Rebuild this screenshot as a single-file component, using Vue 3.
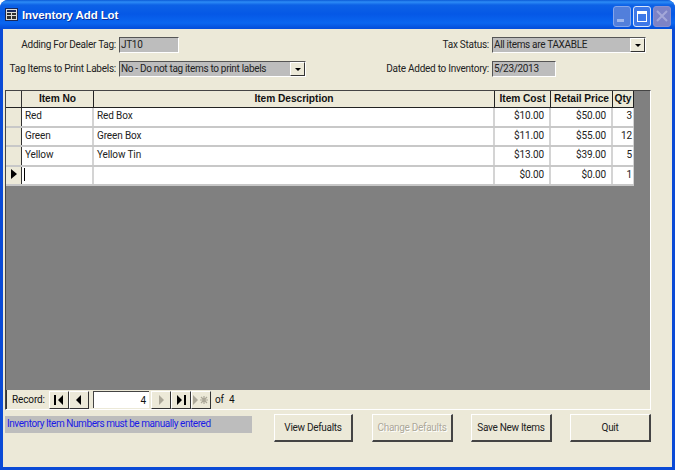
<script setup>
const rows = [
  { no: 'Red', desc: 'Red Box', cost: '$10.00', price: '$50.00', qty: '3' },
  { no: 'Green', desc: 'Green Box', cost: '$11.00', price: '$55.00', qty: '12' },
  { no: 'Yellow', desc: 'Yellow Tin', cost: '$13.00', price: '$39.00', qty: '5' },
  { no: '', desc: '', cost: '$0.00', price: '$0.00', qty: '1', current: true }
]
const buttons = [
  { label: 'View Defualts', cls: 'b1' },
  { label: 'Change Defaults', cls: 'b2', disabled: true },
  { label: 'Save New Items', cls: 'b3' },
  { label: 'Quit', cls: 'b4' }
]
</script>

<template>
  <div class="window">
    <header class="titlebar">
      <svg class="appicon" width="13" height="13" viewBox="0 0 13 13">
        <rect x="0.5" y="0.5" width="12" height="12" fill="#dcdcd8" stroke="#1a2a5a" />
        <rect x="2" y="2" width="9" height="2" fill="#1a2a5a" />
        <rect x="2" y="5" width="4" height="2" fill="#303030" />
        <rect x="7" y="5" width="4" height="2" fill="#303030" />
        <rect x="2" y="8" width="4" height="3" fill="#303030" />
        <rect x="7" y="8" width="4" height="3" fill="#303030" />
      </svg>
      <span class="title">Inventory Add Lot</span>
      <div class="winbtns">
        <span class="wb wmin"><i class="glyph-min"></i></span>
        <span class="wb wmax"><i class="glyph-max"></i></span>
        <span class="wb wclose">
          <svg width="14" height="14" viewBox="0 0 14 14"><path d="M2 2 12 12M12 2 2 12" stroke="#a4a8d8" stroke-width="2" /></svg>
        </span>
      </div>
    </header>

    <main class="client">
      <section class="fields">
        <label class="lbl">Adding For Dealer Tag:</label>
        <div class="box short1">JT10</div>
        <label class="lbl">Tax Status:</label>
        <div class="box combo">All items are TAXABLE<span class="drop"><i></i></span></div>
        <label class="lbl">Tag Items to Print Labels:</label>
        <div class="box combo">No - Do not tag items to print labels<span class="drop"><i></i></span></div>
        <label class="lbl">Date Added to Inventory:</label>
        <div class="box short2">5/23/2013</div>
      </section>

      <section class="frame">
        <div class="sheet">
          <div class="row head">
            <div class="sel"></div>
            <div class="c no">Item No</div>
            <div class="c desc">Item Description</div>
            <div class="c cost">Item Cost</div>
            <div class="c price">Retail Price</div>
            <div class="c qty">Qty</div>
          </div>
          <div v-for="r in rows" :key="r.no + r.qty" class="row data">
            <div class="sel"><i v-if="r.current" class="arrow"></i></div>
            <div class="c no"><i v-if="r.current" class="caret"></i>{{ r.no }}</div>
            <div class="c desc">{{ r.desc }}</div>
            <div class="c cost">{{ r.cost }}</div>
            <div class="c price">{{ r.price }}</div>
            <div class="c qty">{{ r.qty }}</div>
          </div>
        </div>
        <div class="nav">
          <span class="navlabel">Record:</span>
          <div class="navgroup">
            <span class="nb">
              <svg width="12" height="10" viewBox="0 0 12 10"><path d="M1 0h2v10H1zM10 0v10L5 5z" fill="#000" /></svg>
            </span>
            <span class="nb">
              <svg width="12" height="10" viewBox="0 0 12 10"><path d="M8 0v10L3 5z" fill="#000" /></svg>
            </span>
          </div>
          <div class="navinput">4</div>
          <div class="navgroup">
            <span class="nb">
              <svg width="12" height="10" viewBox="0 0 12 10"><path d="M4 0v10l5-5z" fill="#aca899" /></svg>
            </span>
            <span class="nb">
              <svg width="12" height="10" viewBox="0 0 12 10"><path d="M2 0v10l5-5zM9 0h2v10H9z" fill="#000" /></svg>
            </span>
            <span class="nb">
              <svg width="16" height="10" viewBox="0 0 16 10"><path d="M0 0v10l5-5z" fill="#aca899" /><path d="M7 5h8M11 1v8M8 2l6 6M14 2 8 8" stroke="#aca899" stroke-width="1.2" /></svg>
            </span>
          </div>
          <span class="navof">of</span>
          <span class="navtotal">4</span>
        </div>
      </section>

      <footer class="bottom">
        <div class="msg">Inventory Item Numbers must be manually entered</div>
        <div class="actions">
          <button v-for="b in buttons" :key="b.label" class="btn" :class="[b.cls, { off: b.disabled }]">{{ b.label }}</button>
        </div>
      </footer>
    </main>
  </div>
</template>

<style>
html, body { margin: 0; background: #fff; }
</style>

<style scoped>
.window {
  width: 675px;
  height: 470px;
  box-sizing: border-box;
  display: flex;
  flex-direction: column;
  background: #0a4ad6;
  border-radius: 8px 8px 0 0;
  overflow: hidden;
  font-family: Roboto, "Liberation Sans", Arial, sans-serif;
  font-size: 10px;
  letter-spacing: -0.12px;
  color: #111;
}
.titlebar {
  height: 29px;
  flex: none;
  display: flex;
  align-items: center;
  padding: 0 4px 0 5px;
  background: linear-gradient(#0b5ad6 0, #2d8cf6 2px, #0d62e6 5px, #0558e6 14px, #0a66f0 23px, #0450dc 28px);
}
.appicon { margin-right: 4px; margin-top: -1px; }
.title {
  color: #fff;
  font-family: "Liberation Sans", Arial, sans-serif;
  font-weight: bold;
  font-size: 11.5px;
  letter-spacing: -0.1px;
  text-shadow: 1px 1px 0 #0a2f9a;
}
.winbtns { margin-left: auto; display: flex; gap: 2px; margin-top: 3px; }
.wb {
  width: 18px;
  height: 21px;
  box-sizing: border-box;
  border-radius: 3px;
  display: flex;
  align-items: center;
  justify-content: center;
  position: relative;
}
.wmin { background: #527fdb; border: 1px solid #86a6ea; }
.wmax { background: #3e78e8; border: 1px solid #dbe6fb; }
.wclose { background: #7d83c6; border: 1px solid #8a90cf; }
.glyph-min { width: 7px; height: 3px; background: #9db6ec; margin-top: 9px; margin-right: 3px; }
.glyph-max { width: 10px; height: 11px; box-sizing: border-box; border: 1px solid #fff; border-top-width: 3px; }

.client {
  flex: 1;
  margin: 0 3px 3px;
  background: #ece9d8;
  padding-top: 8px;
  display: flex;
  flex-direction: column;
  min-height: 0;
}
.fields {
  display: grid;
  grid-template-columns: 113px 187px 180px 154px;
  grid-auto-rows: 16px;
  column-gap: 3px;
  row-gap: 8px;
}
.lbl { text-align: right; line-height: 16px; color: #222; white-space: nowrap; letter-spacing: -0.26px; }
.box {
  box-sizing: border-box;
  height: 16px;
  line-height: 14px;
  background: #bdbdbd;
  border-top: 1px solid #555;
  border-left: 1px solid #555;
  border-right: 1px solid #fff;
  border-bottom: 1px solid #fff;
  padding-left: 1px;
  position: relative;
  color: #222;
  white-space: nowrap;
  letter-spacing: -0.32px;
}
.short1 { width: 60px; }
.short2 { width: 64px; }
.drop {
  position: absolute;
  right: 0;
  top: 0;
  width: 15px;
  height: 14px;
  box-sizing: border-box;
  background: #ece9d8;
  border-top: 1px solid #fff;
  border-left: 1px solid #fff;
  border-right: 1px solid #333;
  border-bottom: 1px solid #333;
  display: flex;
  align-items: center;
  justify-content: center;
}
.drop i {
  width: 0;
  height: 0;
  border-left: 3px solid transparent;
  border-right: 3px solid transparent;
  border-top: 3px solid #000;
}

.frame {
  margin: 13px 0 0 2px;
  width: 646px;
  box-sizing: border-box;
  border-top: 1px solid #444;
  border-left: 1px solid #444;
  border-right: 1px solid #fff;
  border-bottom: 1px solid #fff;
  display: flex;
  flex-direction: column;
}
.sheet { height: 299px; background: #808080; }
.row { display: flex; width: 628px; }
.head { height: 17px; font-weight: bold; background: #ece9d8; border-bottom: 1px solid #222; box-sizing: border-box; }
.data { height: 19.5px; box-sizing: border-box; background: #fff; border-bottom: 2px solid #c8c8c8; }
.sel {
  width: 16px;
  flex: none;
  box-sizing: border-box;
  background: #ece9d8;
  border-right: 1px solid #333;
  position: relative;
}
.c {
  box-sizing: border-box;
  flex: none;
  line-height: 16px;
  padding: 0 3px;
  white-space: nowrap;
  position: relative;
  color: #222;
}
.head .c {
  border-right: 1px solid #222;
  text-align: center;
  line-height: 16px;
  color: #111;
  font-family: "Liberation Sans", Arial, sans-serif;
  font-size: 10.2px;
  letter-spacing: -0.05px;
}
.data .c { border-right: 2px solid #d4d4d4; }
.no { width: 72px; }
.desc { width: 401px; }
.cost { width: 56px; }
.price { width: 62px; }
.qty { width: 21px; }
.data .cost, .data .price, .data .qty { text-align: right; }
.data .cost, .data .price { padding-right: 5px; }
.data .qty { padding-right: 1px; border-right: 1px solid #d4d4d4; }
.head .qty { padding: 0; }
.arrow {
  position: absolute;
  left: 5px;
  top: 2px;
  width: 0;
  height: 0;
  border-top: 5px solid transparent;
  border-bottom: 5px solid transparent;
  border-left: 6px solid #000;
}
.caret {
  position: absolute;
  left: 2px;
  top: 1px;
  width: 1px;
  height: 13px;
  background: #000;
}

.nav {
  height: 19px;
  display: flex;
  align-items: center;
  background: #ece9d8;
  border-left: 1px solid #333;
}
.navlabel { margin-left: 5px; width: 37px; }
.navgroup { display: flex; }
.nb {
  width: 20px;
  height: 18px;
  box-sizing: border-box;
  background: #ece9d8;
  border-top: 1px solid #fff;
  border-left: 1px solid #fff;
  border-right: 1px solid #333;
  border-bottom: 1px solid #333;
  display: flex;
  align-items: center;
  justify-content: center;
}
.navinput {
  width: 56px;
  height: 17px;
  box-sizing: border-box;
  margin: 0 2px 0 4px;
  background: #fff;
  border-top: 1px solid #444;
  border-left: 1px solid #444;
  text-align: right;
  padding-right: 3px;
  line-height: 17px;
}
.navof { margin-left: 4px; }
.navtotal { margin-left: 5px; }

.bottom {
  display: flex;
  align-items: flex-start;
  padding: 4px 0 0 2px;
}
.msg {
  width: 247px;
  height: 17px;
  margin-top: 2px;
  background: #bdbdbd;
  color: #1a1ae6;
  line-height: 15px;
  padding-left: 2px;
  box-sizing: border-box;
  white-space: nowrap;
  letter-spacing: -0.44px;
}
.actions { display: flex; margin-left: 22px; }
.btn {
  height: 28px;
  padding: 0;
  box-sizing: border-box;
  font: inherit;
  letter-spacing: -0.3px;
  white-space: nowrap;
  color: #222;
  background: #ece9d8;
  border-top: 1px solid #fff;
  border-left: 1px solid #fff;
  border-right: 2px solid #444;
  border-bottom: 2px solid #444;
}
.b1 { width: 79px; }
.b2 { width: 81px; margin-left: 19px; }
.b3 { width: 81px; margin-left: 18px; }
.b4 { width: 81px; margin-left: 18px; }
.off { color: #aca899; text-shadow: 1px 1px 0 #fff; }
</style>
